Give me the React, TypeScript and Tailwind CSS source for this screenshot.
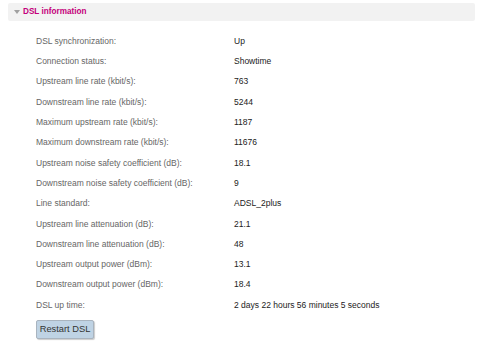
import React from "react";

const rows: [string, string][] = [
  ["DSL synchronization:", "Up"],
  ["Connection status:", "Showtime"],
  ["Upstream line rate (kbit/s):", "763"],
  ["Downstream line rate (kbit/s):", "5244"],
  ["Maximum upstream rate (kbit/s):", "1187"],
  ["Maximum downstream rate (kbit/s):", "11676"],
  ["Upstream noise safety coefficient (dB):", "18.1"],
  ["Downstream noise safety coefficient (dB):", "9"],
  ["Line standard:", "ADSL_2plus"],
  ["Upstream line attenuation (dB):", "21.1"],
  ["Downstream line attenuation (dB):", "48"],
  ["Upstream output power (dBm):", "13.1"],
  ["Downstream output power (dBm):", "18.4"],
  ["DSL up time:", "2 days 22 hours 56 minutes 5 seconds"],
];

export default function App() {
  return (
    <div className="w-[480px] h-[350px] bg-white overflow-hidden" style={{ fontFamily: '"Liberation Sans", Arial, sans-serif' }}>
      <div className="mt-[3px] ml-[8px] mr-[5px] h-[18px] bg-[#f2f2f2] rounded-[2px] flex items-center pl-[6px]">
        <svg width="6" height="5" viewBox="0 0 6 5" className="mr-[3px]">
          <polygon points="0,0 6,0 3,4" fill="#a0a0a0" />
        </svg>
        <span className="text-[8.2px] font-bold text-[#c4007c] leading-none">DSL information</span>
      </div>
      <div className="mt-[10px] pl-[36px] flex flex-col">
        {rows.map(([l, v]) => (
          <div key={l} className="h-[20.3px] flex items-center text-[8.5px] leading-none">
            <span className="w-[198px] text-[#666]">{l}</span>
            <span className="text-[#222]">{v}</span>
          </div>
        ))}
        <div>
          <button className="mt-[-1px] h-[19px] w-[58px] bg-[#bfd3e4] border border-[#a9b4bf] rounded-[2px] text-[9.3px] text-[#333] leading-none shadow-[1px_1px_1px_rgba(0,0,0,0.2)]">
            Restart DSL
          </button>
        </div>
      </div>
    </div>
  );
}
